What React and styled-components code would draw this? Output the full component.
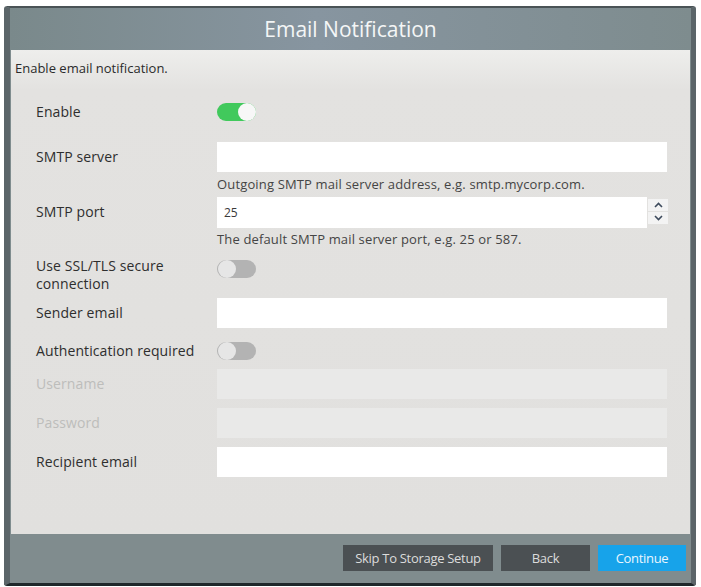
import React from 'react';
import styled, { createGlobalStyle } from 'styled-components';

const GlobalStyle = createGlobalStyle`
  html, body {
    margin: 0;
    padding: 0;
    background: #ffffff;
    font-family: "Open Sans", "Noto Sans", "Liberation Sans", sans-serif;
  }
`;

const Dialog = styled.div`
  box-sizing: border-box;
  width: 692px;
  height: 580px;
  margin: 6px 0 0 4px;
  display: flex;
  flex-direction: column;
  background: #7f8c8e;
  border-top: 2px solid #4a5356;
  border-left: 6px solid #5b6569;
  border-right: 5px solid #5b6569;
  border-bottom: 3px solid #1f282b;
  border-radius: 3px;
`;

const Header = styled.div`
  height: 42px;
  display: flex;
  align-items: center;
  justify-content: center;
  background: linear-gradient(90deg, #7a898b 0%, #8795a0 45%, #7e8c8e 100%);
  color: #f4f6f6;
  font-size: 21px;
`;

const Panel = styled.div`
  flex: 1;
  margin: 0 1px;
  background: linear-gradient(180deg, #eeeeec 0px, #e3e2e0 40px, #e1e0de 100%);
  padding: 8px 0 0 0;
`;

const Intro = styled.div`
  padding-left: 4px;
  line-height: 20px;
  font-size: 13px;
  color: #2b2b2b;
`;

const Form = styled.div`
  display: flex;
  flex-direction: column;
  padding: 0 23px 0 25px;
`;

const Row = styled.div`
  display: grid;
  grid-template-columns: 181px 450px;
  margin-top: ${p => p.$gap}px;
  min-height: ${p => p.$h || 30}px;
  align-items: ${p => (p.$start ? 'start' : 'center')};
`;

const Label = styled.div`
  font-size: 14px;
  line-height: 18px;
  letter-spacing: 0.1px;
  color: ${p => (p.$disabled ? '#bdbdbb' : '#2e2e2e')};
`;

const Field = styled.div`
  display: flex;
  flex-direction: column;
`;

const Input = styled.div`
  box-sizing: border-box;
  height: ${p => p.$h || 30}px;
  background: ${p => (p.$disabled ? '#e9e9e8' : '#ffffff')};
  display: flex;
  align-items: center;
  padding-left: 7px;
  font-size: 12px;
  color: #3a3a3a;
`;

const Hint = styled.div`
  margin-top: ${p => p.$gap}px;
  font-size: 13px;
  line-height: 16px;
  letter-spacing: 0.15px;
  color: #454545;
`;

const PortBox = styled.div`
  display: flex;
  width: 451px;
`;

const Spinner = styled.div`
  width: 20px;
  margin-left: 1px;
  display: flex;
  flex-direction: column;
  gap: 1px;
  padding-top: 2px;
`;

const SpinBtn = styled.div`
  height: 12px;
  background: #f3f3f3;
  display: flex;
  align-items: center;
  justify-content: center;
`;

const Toggle = styled.div`
  position: relative;
  width: 39px;
  height: 18px;
  border-radius: 9px;
  background: ${p => (p.$on ? '#41c95c' : '#b3b3b3')};
  margin-top: ${p => p.$offset || 0}px;
`;

const Knob = styled.div`
  position: absolute;
  top: 0;
  left: ${p => (p.$on ? '21px' : '1px')};
  width: 18px;
  height: 18px;
  border-radius: 50%;
  background: ${p => (p.$on ? '#f7f7f7' : '#e6e6e6')};
`;

const Footer = styled.div`
  height: 49px;
  display: flex;
  justify-content: flex-end;
  align-items: flex-start;
  gap: 8px;
  padding: 11px 5px 0 0;
  box-sizing: border-box;
  background: #808c8e;
`;

const Button = styled.div`
  height: 26px;
  width: ${p => p.$w}px;
  display: flex;
  align-items: center;
  justify-content: center;
  background: ${p => (p.$primary ? '#17a3ea' : '#4b5053')};
  color: ${p => (p.$primary ? '#eaf6ff' : '#dcdcdc')};
  font-size: 13px;
  letter-spacing: -0.3px;
`;

const Chevron = ({ up }) => (
  <svg width="9" height="6" viewBox="0 0 9 6">
    <path
      d={up ? 'M1 5 L4.5 1.5 L8 5' : 'M1 1 L4.5 4.5 L8 1'}
      fill="none"
      stroke="#3d4a5c"
      strokeWidth="1.6"
    />
  </svg>
);

const Switch = ({ on, offset }) => (
  <Toggle $on={on} $offset={offset}>
    <Knob $on={on} />
  </Toggle>
);

const App = () => (
  <>
    <GlobalStyle />
    <Dialog>
      <Header>Email Notification</Header>
      <Panel>
        <Intro>Enable email notification.</Intro>
        <Form>
          <Row $gap={19}>
            <Label>Enable</Label>
            <Switch on />
          </Row>
          <Row $gap={15} $start>
            <Label style={{ marginTop: 6 }}>SMTP server</Label>
            <Field>
              <Input />
              <Hint $gap={4}>Outgoing SMTP mail server address, e.g. smtp.mycorp.com.</Hint>
            </Field>
          </Row>
          <Row $gap={5} $start>
            <Label style={{ marginTop: 6 }}>SMTP port</Label>
            <Field>
              <PortBox>
                <Input $h={31} style={{ flex: 1 }}>25</Input>
                <Spinner>
                  <SpinBtn><Chevron up /></SpinBtn>
                  <SpinBtn><Chevron /></SpinBtn>
                </Spinner>
              </PortBox>
              <Hint $gap={3}>The default SMTP mail server port, e.g. 25 or 587.</Hint>
            </Field>
          </Row>
          <Row $gap={10} $start $h={35}>
            <Label>Use SSL/TLS secure<br />connection</Label>
            <Switch offset={3} />
          </Row>
          <Row $gap={5}>
            <Label>Sender email</Label>
            <Input />
          </Row>
          <Row $gap={8}>
            <Label>Authentication required</Label>
            <Switch />
          </Row>
          <Row $gap={3}>
            <Label $disabled>Username</Label>
            <Input $disabled />
          </Row>
          <Row $gap={9}>
            <Label $disabled>Password</Label>
            <Input $disabled />
          </Row>
          <Row $gap={9}>
            <Label>Recipient email</Label>
            <Input />
          </Row>
        </Form>
      </Panel>
      <Footer>
        <Button $w={150}>Skip To Storage Setup</Button>
        <Button $w={89}>Back</Button>
        <Button $w={88} $primary>Continue</Button>
      </Footer>
    </Dialog>
  </>
);

export default App;
